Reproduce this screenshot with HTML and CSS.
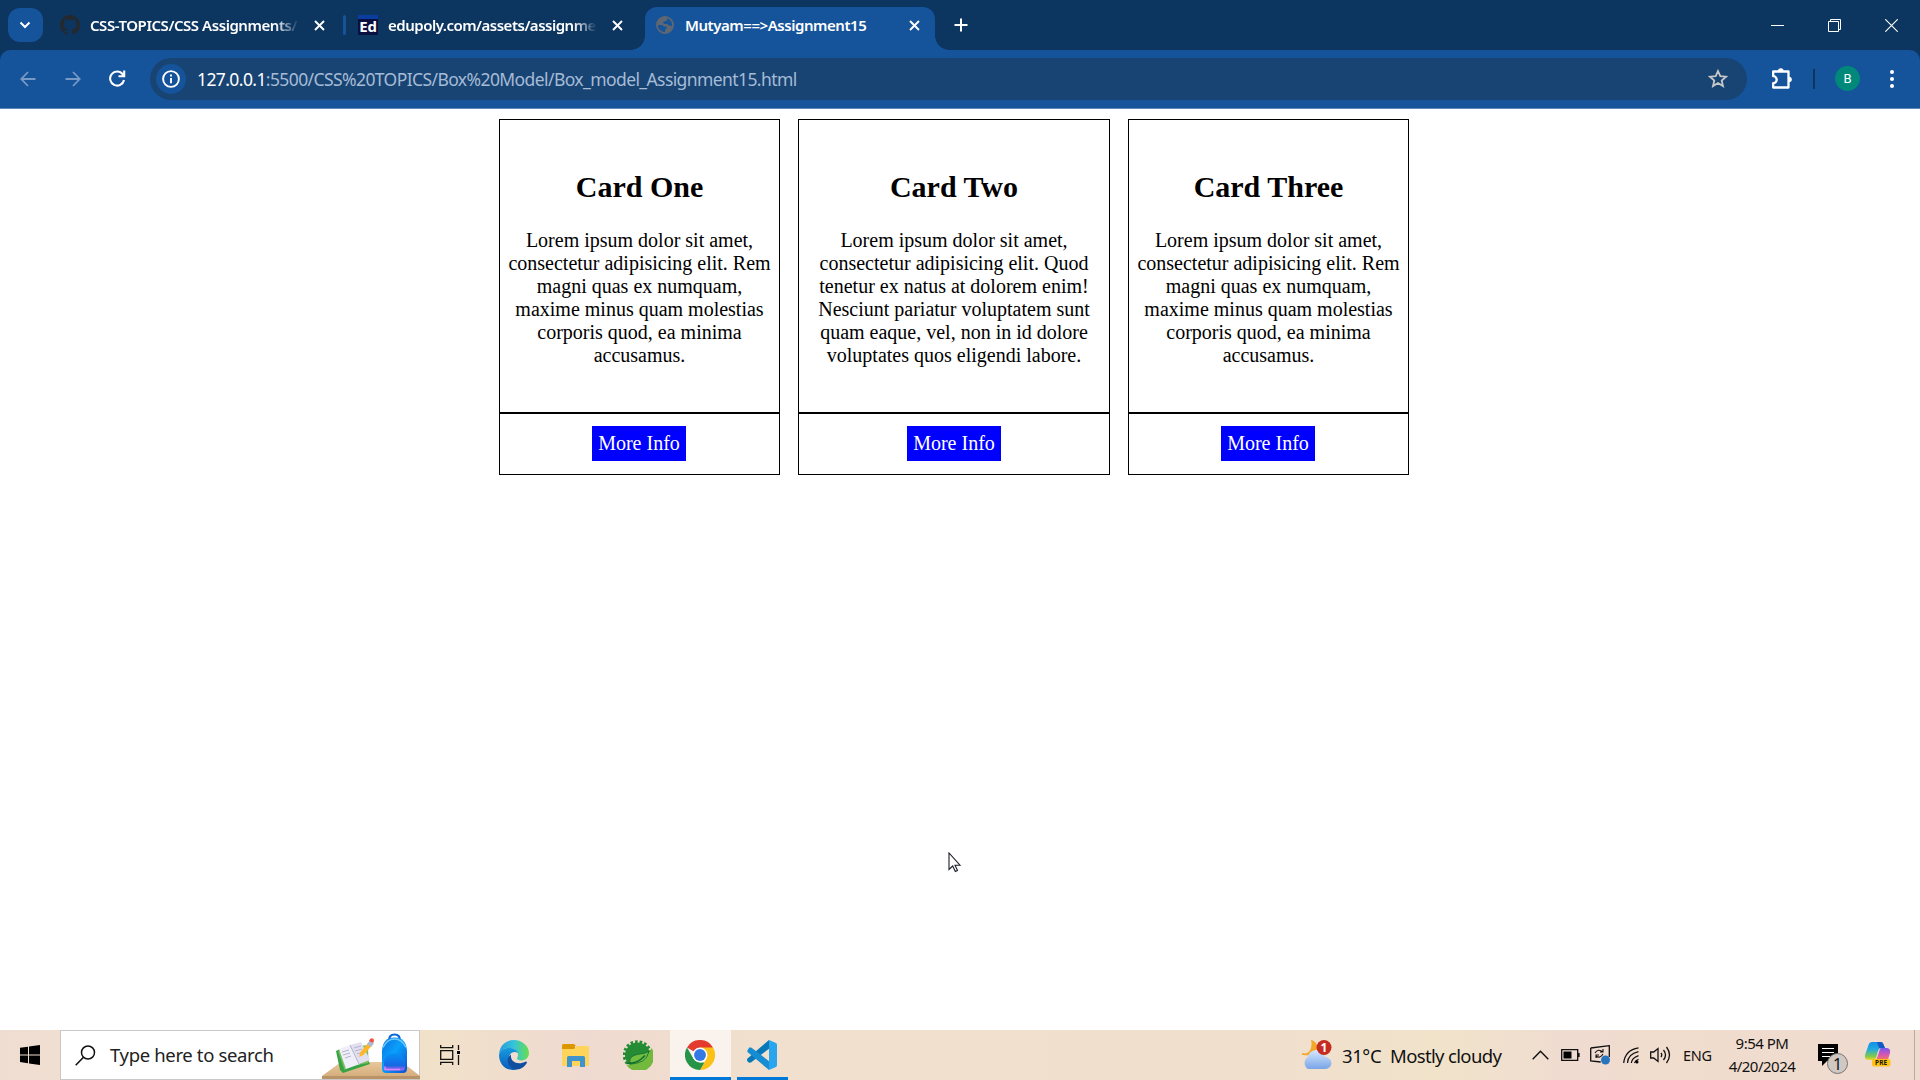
FILE: index.html
```html
<!DOCTYPE html>
<html lang="en">
<head>
<meta charset="utf-8">
<title>Mutyam==&gt;Assignment15</title>
<link rel="stylesheet" href="styles.css">
</head>
<body>
<div class="screen">
  <header class="tabstrip">
    <button class="tab-search"><svg width="12" height="8" viewBox="0 0 12 8"><path d="M1.500 1.500 6 6l4.500-4.500" fill="none" stroke="#fff" stroke-width="2"/></svg></button>
    <div class="tab tab-one">
      <svg class="favicon" width="20" height="20" viewBox="0 0 16 16"><path fill="#24292f" d="M8 0C3.580 0 0 3.580 0 8c0 3.540 2.290 6.530 5.470 7.590.4.070.55-.17.55-.38 0-.19-.01-.82-.01-1.490-2.010.37-2.530-.49-2.690-.94-.09-.23-.48-.94-.82-1.130-.28-.15-.68-.52-.01-.53.63-.01 1.080.58 1.230.82.72 1.210 1.870.87 2.330.66.07-.52.28-.87.51-1.070-1.780-.2-3.640-.89-3.640-3.950 0-.87.31-1.590.82-2.150-.08-.2-.36-1.020.08-2.120 0 0 .67-.21 2.200.82a7.600 7.600 0 0 1 4 0c1.530-1.040 2.200-.82 2.200-.82.44 1.100.16 1.920.08 2.120.51.56.82 1.270.82 2.150 0 3.070-1.870 3.750-3.650 3.950.29.25.54.73.54 1.480 0 1.070-.01 1.930-.01 2.200 0 .21.15.46.55.38A8 8 0 0 0 16 8c0-4.420-3.580-8-8-8Z"/></svg>
      <span class="tab-title fade">CSS-TOPICS/CSS Assignments/</span>
      <svg class="close" width="11" height="11" viewBox="0 0 11 11"><path d="m1 1 9 9m0-9-9 9" stroke="#fff" stroke-width="1.900"/></svg>
    </div>
    <i class="tab-divider"></i>
    <div class="tab tab-two">
      <span class="favicon ed-icon">Ed</span>
      <span class="tab-title fade">edupoly.com/assets/assignmen</span>
      <svg class="close" width="11" height="11" viewBox="0 0 11 11"><path d="m1 1 9 9m0-9-9 9" stroke="#fff" stroke-width="1.900"/></svg>
    </div>
    <div class="tab tab-active">
      <svg class="favicon" width="18" height="18" viewBox="0 0 18 18"><circle cx="9" cy="9" r="8.100" fill="none" stroke="#5f6773" stroke-width="1.800"/><path fill="#5f6773" d="M9 1a8 8 0 0 0-8 8h5l2 1.500h2.500v2L9 14v3l4-1 3.500-5-2-1.500h-2L11.500 8 8 8 7 6l3-1 1.500-1L11 1Z"/></svg>
      <span class="tab-title">Mutyam==&gt;Assignment15</span>
      <svg class="close" width="11" height="11" viewBox="0 0 11 11"><path d="m1 1 9 9m0-9-9 9" stroke="#fff" stroke-width="1.900"/></svg>
    </div>
    <svg class="new-tab" width="14" height="14" viewBox="0 0 14 14"><path d="M7 .5v13M.5 7h13" stroke="#fff" stroke-width="2"/></svg>
    <div class="window-buttons">
      <svg width="13" height="13" viewBox="0 0 13 13"><path d="M0 6.500h13" stroke="#fff"/></svg>
      <svg width="13" height="13" viewBox="0 0 13 13"><path d="M.5 2.500h10v10H.5ZM2.500 2.500v-2h10v10h-2" fill="none" stroke="#fff"/></svg>
      <svg width="13" height="13" viewBox="0 0 13 13"><path d="m.3.3 12.400 12.400m0-12.400L.3 12.700" stroke="#fff" stroke-width="1.100"/></svg>
    </div>
  </header>

  <nav class="toolbar">
    <svg class="nav-back" width="16" height="16" viewBox="0 0 16 16"><path d="M15.500 8H1.500M8 1 1.300 8 8 15" fill="none" stroke="#7699c6" stroke-width="1.800"/></svg>
    <svg class="nav-forward" width="16" height="16" viewBox="0 0 16 16"><path d="M.5 8h14M8 1l6.700 7L8 15" fill="none" stroke="#7699c6" stroke-width="1.800"/></svg>
    <svg class="nav-reload" width="17" height="17" viewBox="0 0 17 17"><path d="M15 10a7 7 0 1 1-1.300-5.700L15.200 6M15.200.5v5.700H9.500" fill="none" stroke="#fff" stroke-width="2.100"/></svg>
    <div class="omnibox">
      <span class="site-info"><svg width="18" height="18" viewBox="0 0 18 18"><circle cx="9" cy="9" r="7.900" fill="none" stroke="#fff" stroke-width="1.900"/><path d="M9 8v5.200M9 4.500v2" stroke="#fff" stroke-width="1.900"/></svg></span>
      <span class="url"><b>127.0.0.1</b>:5500/CSS%20TOPICS/Box%20Model/Box_model_Assignment15.html</span>
      <svg class="star" width="20" height="19" viewBox="0 0 20 19"><path d="m10 2 2.300 5.200 5.700.5-4.300 3.800 1.300 5.600-5-3-5 3 1.300-5.600L2 7.700l5.700-.5Z" fill="none" stroke="#c7c7c7" stroke-width="1.800"/></svg>
    </div>
    <svg class="extensions" width="22" height="22" viewBox="0 0 22 22"><path d="M2.200 3.500h15.300v16H2.200v-4.300a3.300 3.300 0 0 0 0-7Z" fill="none" stroke="#fff" stroke-width="2.300" stroke-linejoin="round"/><path d="M7 3a2.800 2.800 0 0 1 5.600 0ZM18 8.700a2.800 2.800 0 0 1 0 5.600Z" fill="#fff"/></svg>
    <i class="toolbar-divider"></i>
    <span class="avatar">B</span>
    <svg class="menu" width="4" height="18" viewBox="0 0 4 18"><g fill="#fff"><circle cx="2" cy="2" r="2"/><circle cx="2" cy="9" r="2"/><circle cx="2" cy="16" r="2"/></g></svg>
  </nav>

  <main class="page">
    <article class="card">
      <section class="card-body"><h2>Card One</h2><p>Lorem ipsum dolor sit amet,<br>consectetur adipisicing elit. Rem<br>magni quas ex numquam,<br>maxime minus quam molestias<br>corporis quod, ea minima<br>accusamus.</p></section>
      <footer class="card-footer"><a class="more">More Info</a></footer>
    </article>
    <article class="card card-wide">
      <section class="card-body"><h2>Card Two</h2><p>Lorem ipsum dolor sit amet,<br>consectetur adipisicing elit. Quod<br>tenetur ex natus at dolorem enim!<br>Nesciunt pariatur voluptatem sunt<br>quam eaque, vel, non in id dolore<br>voluptates quos eligendi labore.</p></section>
      <footer class="card-footer"><a class="more">More Info</a></footer>
    </article>
    <article class="card">
      <section class="card-body"><h2>Card Three</h2><p>Lorem ipsum dolor sit amet,<br>consectetur adipisicing elit. Rem<br>magni quas ex numquam,<br>maxime minus quam molestias<br>corporis quod, ea minima<br>accusamus.</p></section>
      <footer class="card-footer"><a class="more">More Info</a></footer>
    </article>
    <svg class="pointer" width="14" height="21" viewBox="0 0 14 21"><path d="M1 1v16.500l3.700-3.500 2.600 5.500 2.200-1-2.500-5.300H12Z" fill="#fff" stroke="#1c1c2a" stroke-width="1.100"/></svg>
  </main>

  <footer class="taskbar">
    <div class="start"><svg width="20" height="20" viewBox="0 0 20 20"><path d="M0 2.800 8 1.700v7.700H0ZM9 1.500 20 0v9.400H9ZM0 10.400h8v7.800l-8-1.100ZM9 10.400h11V20L9 18.400Z"/></svg></div>
    <div class="search">
      <svg class="search-icon" width="21" height="21" viewBox="0 0 21 21"><circle cx="13" cy="7.500" r="6.500" fill="none" stroke="#111" stroke-width="1.500"/><path d="M8.500 12.300.7 20.300" stroke="#111" stroke-width="1.600"/></svg>
      <span class="search-text">Type here to search</span>
      <svg class="search-art" width="98" height="48" viewBox="0 0 98 48">
        <defs><linearGradient id="desk" x2="0" y2="1"><stop stop-color="#e9c799"/><stop offset="1" stop-color="#d5ae7e"/></linearGradient><linearGradient id="bag" x2="1" y2="1"><stop stop-color="#0a6fe0"/><stop offset=".45" stop-color="#0aa0fb"/><stop offset="1" stop-color="#0b50cf"/></linearGradient><linearGradient id="pocket" x2="0" y2="1"><stop stop-color="#0591f5"/><stop offset=".7" stop-color="#1767e4"/><stop offset="1" stop-color="#b468ee"/></linearGradient></defs>
        <path d="M0 45 19 31h61l18 14Z" fill="url(#desk)"/><path d="M0 45h98v3H0Z" fill="#b99367"/>
        <g transform="translate(0 1)"><path d="m14 19 4-2 8 17 20-6 2 4-27 9-3-3Z" fill="#36a344"/><path d="m16 19 13-4 17-2 .5 18-18 3-6 4Z" fill="#7abe61"/>
        <path d="m17 17 11-4 10 19-14 5Z" fill="#f0eef8"/><path d="m28 13 11-3 9 18-11 4Z" fill="#e2e0f0"/><path d="m28 13 9 19" stroke="#b5b3d0"/><path d="m20 20 7-2m-6 5 7-2m-5 5 6-2m3-8 7-2m-6 5 7-2m-5 5 6-2" stroke="#b4b3cb"/>
        <path d="m37 25 1.500-5L47 10l3.500 3-9 10Z" fill="#ffb629"/><path d="m45 12 3-3.500 4 3-3 3.500Z" fill="#a9bdd3"/><path d="m47 9 1-2q4-2 4 2l-1 2Z" fill="#f15242"/></g>
        <g transform="translate(0 .5)"><path d="M67 9q0-6 5.500-6T78 9" fill="none" stroke="#0868d8" stroke-width="2.200"/><path d="M60 19Q61 6 72.500 6T85 19v18q0 4.500-4 4.500H64q-4 0-4-4.500Z" fill="url(#bag)"/><path d="M61 16Q65 7.500 72.500 7.500T84 16" fill="none" stroke="#68c8ff" stroke-width="1.600"/><path d="M62 31Q63 22 72.500 22T83 31v5q0 3-3 3H65q-3 0-3-3Z" fill="url(#pocket)"/><path d="M63 35v3h15" fill="none" stroke="#d986ff" stroke-width="1.500"/></g>
      </svg>
    </div>
    <div class="task task-view"><svg width="20" height="20" viewBox="0 0 20 20"><path d="M.7 0v2.700h12V0M.7 20v-2.700h12V20M.7 5.700h12v8.600H.7ZM18.500 0v5M18.500 10v10" fill="none" stroke="#111" stroke-width="1.300"/><path d="M17 6h3v3h-3Z"/></svg></div>
    <div class="task task-edge"><svg width="30" height="30" viewBox="0 0 30 30">
      <defs><linearGradient id="edgeTop"><stop stop-color="#269bdc"/><stop offset=".5" stop-color="#36c3da"/><stop offset="1" stop-color="#66df4b"/></linearGradient><linearGradient id="edgeSide" x2="0" y2="1"><stop stop-color="#169bdf"/><stop offset="1" stop-color="#0b5bb9"/></linearGradient></defs>
      <path d="M0 14C1 5 7 0 15 0s15 6 15 13c0 5-4 7.500-8 7.500-3 0-4-1.500-4-2.200s1-1.100 1-3.300C19 11 15 8 10 8 5 8 1 11 0 14Z" fill="url(#edgeTop)"/><path d="M0 15C1 10 5 8 10 8c4 0 8 2 9 5-5-3-9 1-9 5 0 5 4 10 8 11.500C8 32 0 25 0 15Z" fill="url(#edgeSide)"/><path d="M12 14.500c-7 5-2 15 6 15 4 0 8-3 10-7 0-1-1-1-1-1-8 4-16 1-15-7Z" fill="#104f9f"/></svg></div>
    <div class="task task-files"><svg width="27" height="23" viewBox="0 0 27 23"><path d="M0 1.500Q0 0 1.500 0H12l2 2h-1v3H0Z" fill="#dc9700"/><path d="M0 5h12l3-3h10.500Q27 2 27 3.500v17q0 1.500-1.500 1.500h-24Q0 22 0 20.500Z" fill="#ffd45b"/><path d="M5 23v-9.500Q5 12 6.500 12h15q1.500 0 1.500 1.500V23h-5v-6h-8v6Z" fill="#3f94ce"/></svg></div>
    <div class="task task-spring"><svg width="30" height="30" viewBox="0 0 30 30"><circle cx="14.500" cy="15" r="12.500" fill="#258b35"/><circle cx="14.500" cy="15" r="13.300" fill="none" stroke="#258b35" stroke-width="3" stroke-dasharray="2.600 2"/><path d="M28.500 8A15 15 0 0 1 3.500 25Q12 25 18 21q7-4 10.500-13Z" fill="#73b93e"/><path d="M26 11q-3 2.500-9 3C9 15 6 18 7 23q16 2 19-12Z" fill="#70bd3f" stroke="#126d30" stroke-width=".8"/><path d="M4 23.500c9 0 13-3 18-8" fill="none" stroke="#126d30" stroke-width="1.500"/></svg></div>
    <div class="task task-chrome"><svg width="30" height="30" viewBox="0 0 48 48"><path d="M24 24 3.200 12A24 24 0 0 1 44.800 12Z" fill="#e33b2e"/><path d="M24 12h20.800A24 24 0 0 1 24 48l10.400-18Z" fill="#fbc116"/><path d="M3.200 12 13.600 30 24 36h7L24 48A24 24 0 0 1 3.200 12Z" fill="#269447"/><circle cx="24" cy="24" r="12" fill="#fff"/><circle cx="24" cy="24" r="9.500" fill="#337ae5"/></svg></div>
    <div class="task task-code"><svg width="30" height="30" viewBox="0 0 30 30"><path d="m22 0 1 8L4 22.500l-2 .2-2-2 .2-2Z" fill="#0878bb"/><path d="m.2 11 2-3.500h2L23 22l-1 8L.5 12Z" fill="#168dd2"/><path d="m22 0 7 3q1 .5 1 2v20q0 1.500-1 2l-7 3V0Z" fill="#28a5ed"/></svg></div>
    <div class="weather">
      <svg width="31" height="30" viewBox="0 0 31 30"><defs><linearGradient id="cloud" x2="0" y2="1"><stop stop-color="#d7e7ff"/><stop offset="1" stop-color="#78a5e7"/></linearGradient></defs><path d="M11 1q6 3 4 9t-14 4q7 1 9-4 2-5 1-9Z" fill="#f3a82b" stroke="#f3a82b" stroke-width="1.500"/><path d="M7 29a7 7 0 0 1 0-12C8 12 12 10 16 10s7 3 8 7c9 1 8 12 0 12Z" fill="url(#cloud)"/><circle cx="23" cy="7.500" r="7.500" fill="#c62b20"/><text x="23" y="12" text-anchor="middle" class="badge-number">1</text></svg>
      <span class="weather-temp">31°C</span><span class="weather-text">Mostly cloudy</span>
    </div>
    <div class="tray">
      <svg class="tray-chevron" width="17" height="10" viewBox="0 0 17 10"><path d="m.7 9.300 7.800-8 7.800 8" fill="none" stroke="#111" stroke-width="1.400"/></svg>
      <svg class="tray-battery" width="19" height="12" viewBox="0 0 19 12"><path d="M.7.7h16v10.600H.7ZM18 4v4" fill="none" stroke="#111" stroke-width="1.300"/><path d="M2.500 2.500h8v7h-8Z"/></svg>
      <svg class="tray-sync" width="21" height="20" viewBox="0 0 21 20"><path d="M.7 3 19.300.7V12M.7 3v13l10 1" fill="none" stroke="#111" stroke-width="1.300"/><path d="M5 8q3-5 8-1m0-3v3h-3m3 2q-3 5-7 2m0 2v-3h3" fill="none" stroke="#111" stroke-width="1.100"/><circle cx="15.500" cy="15" r="4.500" fill="#2875bf"/></svg>
      <svg class="tray-wifi" width="17" height="17" viewBox="0 0 17 17"><g fill="none" stroke="#111" stroke-width="1.250"><path d="M.7 16Q2 3 15.500.8"/><path d="M4.500 16Q5 7 15.500 4.700"/><path d="M8.300 16q.5-5 7.200-7.400"/><path d="M11.500 16q1-3 4-3.700"/></g><circle cx="14" cy="15" r="1.500"/></svg>
      <svg class="tray-sound" width="21" height="18" viewBox="0 0 21 18"><path d="M.7 6h3L8 2.500v13L3.700 12h-3ZM11 7q1.500 2 0 4m2.500-7q4 5 0 10m3-13q6 8 0 16" fill="none" stroke="#111" stroke-width="1.300"/></svg>
      <span class="language">ENG</span>
      <div class="clock"><span class="time">9:54 PM</span><span class="date">4/20/2024</span></div>
      <svg class="notifications" width="30" height="31" viewBox="0 0 30 31"><path d="M0 0h20v17H9l-5 5v-5H0Z"/><path d="M4 4.500h12M4 8.500h12M4 12.500h8" stroke="#fff" stroke-width="1.200"/><circle cx="19.500" cy="19.500" r="10" fill="#cfc8c3" stroke="#77716d"/><text x="19.500" y="25.500" text-anchor="middle" class="note-number">1</text></svg>
      <svg class="copilot" width="26" height="26" viewBox="0 0 26 26"><defs><linearGradient id="copA" x2="0" y2="1"><stop stop-color="#138eea"/><stop offset=".4" stop-color="#20aadf"/><stop offset=".8" stop-color="#82cb48"/><stop offset="1" stop-color="#efd635"/></linearGradient><linearGradient id="copB" x2="0" y2="1"><stop stop-color="#7658ef"/><stop offset=".5" stop-color="#d456b4"/><stop offset="1" stop-color="#ff7951"/></linearGradient></defs><path d="M7 0h9q2 0 2.500 2.500L20 6h-4q-2 0-3 3l-2 7q-.7 2-2.500 2H4q-5 0-4-5L3.500 3Q4.500 0 7 0Z" fill="url(#copA)"/><path d="M12 0h4q2 0 2.500 2.500L20 6h-6Z" fill="#155ac4"/><path d="M16 6h5q5 0 4 5l-2.500 8H9q2 0 3-3l2-6q1-4 2-4Z" fill="url(#copB)"/><rect x="7" y="17" width="18.500" height="7.500" rx="2" fill="#ffc315"/><text x="16.200" y="23.300" text-anchor="middle" class="pre-label">PRE</text></svg>
    </div>
    <i class="show-desktop"></i>
  </footer>
</div>
</body>
</html>
```
FILE: styles.css
```css
* { box-sizing: border-box; }
body { margin: 0; background: #fff; overflow: hidden; font-family: "Noto Sans", "Open Sans", sans-serif; }
svg { display: block; flex-shrink: 0; }
.screen { width: 1920px; height: 1080px; display: flex; flex-direction: column; background: linear-gradient(#0c3560 80px, #fff 80px); }

.tabstrip { height: 50px; flex: none; display: flex; align-items: center; background: #0c3560; color: #fff; }
.tab-search { width: 35px; height: 34px; margin-left: 8px; padding: 0 1px 0 0; border: 0; border-radius: 12px; background: #15539a; display: flex; align-items: center; justify-content: center; flex: none; }
.tab { height: 50px; display: flex; align-items: center; flex: none; }
.tab-one { width: 300px; padding-left: 17px; }
.tab-two { width: 299px; padding-left: 12px; }
.tab-divider { width: 3px; height: 20px; background: #15539a; border-radius: 2px; }
.tab-title { width: 209px; margin-left: 10px; overflow: hidden; white-space: nowrap; font-size: 15px; line-height: 22px; font-weight: 600; letter-spacing: -.45px; }
.tab-one .close { margin-left: 15px; }
.tab-two .close { margin-left: 15px; }
.tab-two .tab-title { letter-spacing: -.5px; }
.fade { -webkit-mask-image: linear-gradient(90deg, #000 185px, transparent 209px); mask-image: linear-gradient(90deg, #000 185px, transparent 209px); }
.ed-icon { width: 20px; height: 20px; background: #0b1040; border-top: 4px solid #0b3da0; font: 700 15px/14px "Open Sans", sans-serif; text-align: center; letter-spacing: -.3px; }
.tab-active { width: 290px; height: 43px; margin-top: 7px; padding: 0 0 7px 11px; border-radius: 12px 12px 0 0; background: #15539a; position: relative; }
.tab-active::before, .tab-active::after { content: ""; position: absolute; bottom: 0; width: 14px; height: 14px; }
.tab-active::before { left: -14px; background: radial-gradient(circle at 0 0, transparent 13.500px, #15539a 14px); }
.tab-active::after { right: -14px; background: radial-gradient(circle at 100% 0, transparent 13.500px, #15539a 14px); }
.tab-active .tab-title { width: 211px; margin-left: 11px; }
.tab-active .close { margin-left: 13px; }
.new-tab { margin-left: 19px; }
.window-buttons { margin: 0 22px 0 auto; display: flex; gap: 44px; }

.toolbar { height: 59px; flex: none; display: flex; align-items: center; padding: 0 26px 1px 20px; background: #15539a; border-bottom: 1px solid #5c88bb; border-radius: 10px 10px 0 0; }
.nav-forward { margin-left: 29px; }
.nav-reload { margin-left: 28px; }
.omnibox { width: 1597px; height: 42px; margin-left: 24px; padding: 0 19px 0 6px; border-radius: 21px; background: #184474; display: flex; align-items: center; flex: none; }
.site-info { width: 30px; height: 30px; border-radius: 50%; background: #15539a; display: flex; align-items: center; justify-content: center; }
.url { margin-left: 11px; color: #a6bbd5; font-size: 17.500px; line-height: 26px; white-space: nowrap; letter-spacing: -.59px; }
.url b { color: #fff; font-weight: 400; }
.star { margin-left: auto; }
.extensions { margin-left: 24px; }
.toolbar-divider { width: 2px; height: 20px; margin-left: 20px; background: #0c3560; }
.avatar { width: 25px; height: 25px; margin-left: 20px; border-radius: 50%; background: #00897b; color: #fff; font: 13px/25px Roboto, sans-serif; text-align: center; }
.menu { margin-left: auto; }

.page { height: 921px; flex: none; padding: 10px 0 0 499px; background: #fff; display: flex; align-items: flex-start; gap: 18px; font-family: "Liberation Serif", "Times New Roman", serif; color: #000; position: relative; }
.card { width: 281px; }
.card-wide { width: 312px; }
.card-body { height: 294px; padding-top: 50px; border: 1px solid #000; text-align: center; }
.card h2 { margin: 0 0 25px; font-size: 30px; line-height: 34px; font-weight: 700; }
.card p { margin: 0; font-size: 20px; line-height: 23px; white-space: nowrap; }
.card-footer { height: 62px; padding: 12px 1px 0 0; border: 1px solid #000; display: flex; justify-content: center; align-items: flex-start; }
.card-wide .card-footer { padding-right: 0; }
.more { width: 94px; height: 35px; padding-top: 6px; background: #00f; color: #fff; font-size: 20px; line-height: 23px; text-align: center; white-space: nowrap; }
.pointer { position: absolute; left: 948px; top: 743px; }

.taskbar { height: 50px; flex: none; display: flex; align-items: center; background: linear-gradient(90deg, #efddd3 0, #f1dfcf 90px, #f1e1c9 430px, #efdad1 580px, #f1e0cd 760px, #f0dfcd 1280px, #f1e3ca 1440px, #efdbd1 1580px, #f1ddcd 1650px, #efdbd0 1920px); color: #111; }
.start { width: 60px; padding-left: 20px; }
.search { width: 360px; height: 50px; border: 1px solid #c8c8c8; background: #fff; display: flex; align-items: center; padding-left: 14px; flex: none; }
.search-text { width: 180px; margin-left: 14px; font-size: 18.500px; line-height: 28px; letter-spacing: -.35px; white-space: nowrap; color: #222; }
.search-art { margin: 0 -1px 0 auto; }
.task { width: 62px; height: 50px; display: flex; align-items: center; justify-content: center; flex: none; }
.task-view { width: 60px; }
.task-edge { width: 68px; }
.task-files { width: 55px; }
.task-spring { width: 67px; padding-left: 2px; }
.task-chrome { width: 61px; padding: 3px 1px 0 0; background: #faf2ec; border-bottom: 3px solid #0078d7; }
.task-code { width: 51px; margin-left: 6px; padding: 3px 1px 0 0; border-bottom: 3px solid #0078d7; }
.weather { width: 231px; margin-left: 513px; display: flex; align-items: center; flex: none; font-size: 18.500px; letter-spacing: -.65px; white-space: nowrap; }
.weather-temp { width: 38px; margin-left: 10px; letter-spacing: -.4px; }
.weather-text { margin-left: 10px; }
.badge-number { font: 700 12px "Noto Sans", sans-serif; fill: #fff; letter-spacing: 0; }
.tray { display: flex; align-items: center; flex: none; }
.tray-battery { margin-left: 12px; }
.tray-sync { margin-left: 10px; }
.tray-wifi { margin-left: 12px; }
.tray-sound { margin-left: 10px; }
.language { width: 29px; margin-left: 12px; font-size: 14.500px; letter-spacing: -.3px; }
.clock { width: 70px; margin-left: 15px; display: flex; flex-direction: column; align-items: center; font-size: 15px; line-height: 23px; letter-spacing: -.5px; white-space: nowrap; }
.notifications { margin: 9px 0 0 21px; }
.note-number { font: 16px "Noto Sans", sans-serif; fill: #111; }
.copilot { margin-left: 17px; }
.pre-label { font: 700 6.500px "Noto Sans", sans-serif; letter-spacing: .2px; fill: #221800; }
.show-desktop { width: 1px; height: 50px; margin: 0 5px 0 auto; background: #b8aaa3; }
```
